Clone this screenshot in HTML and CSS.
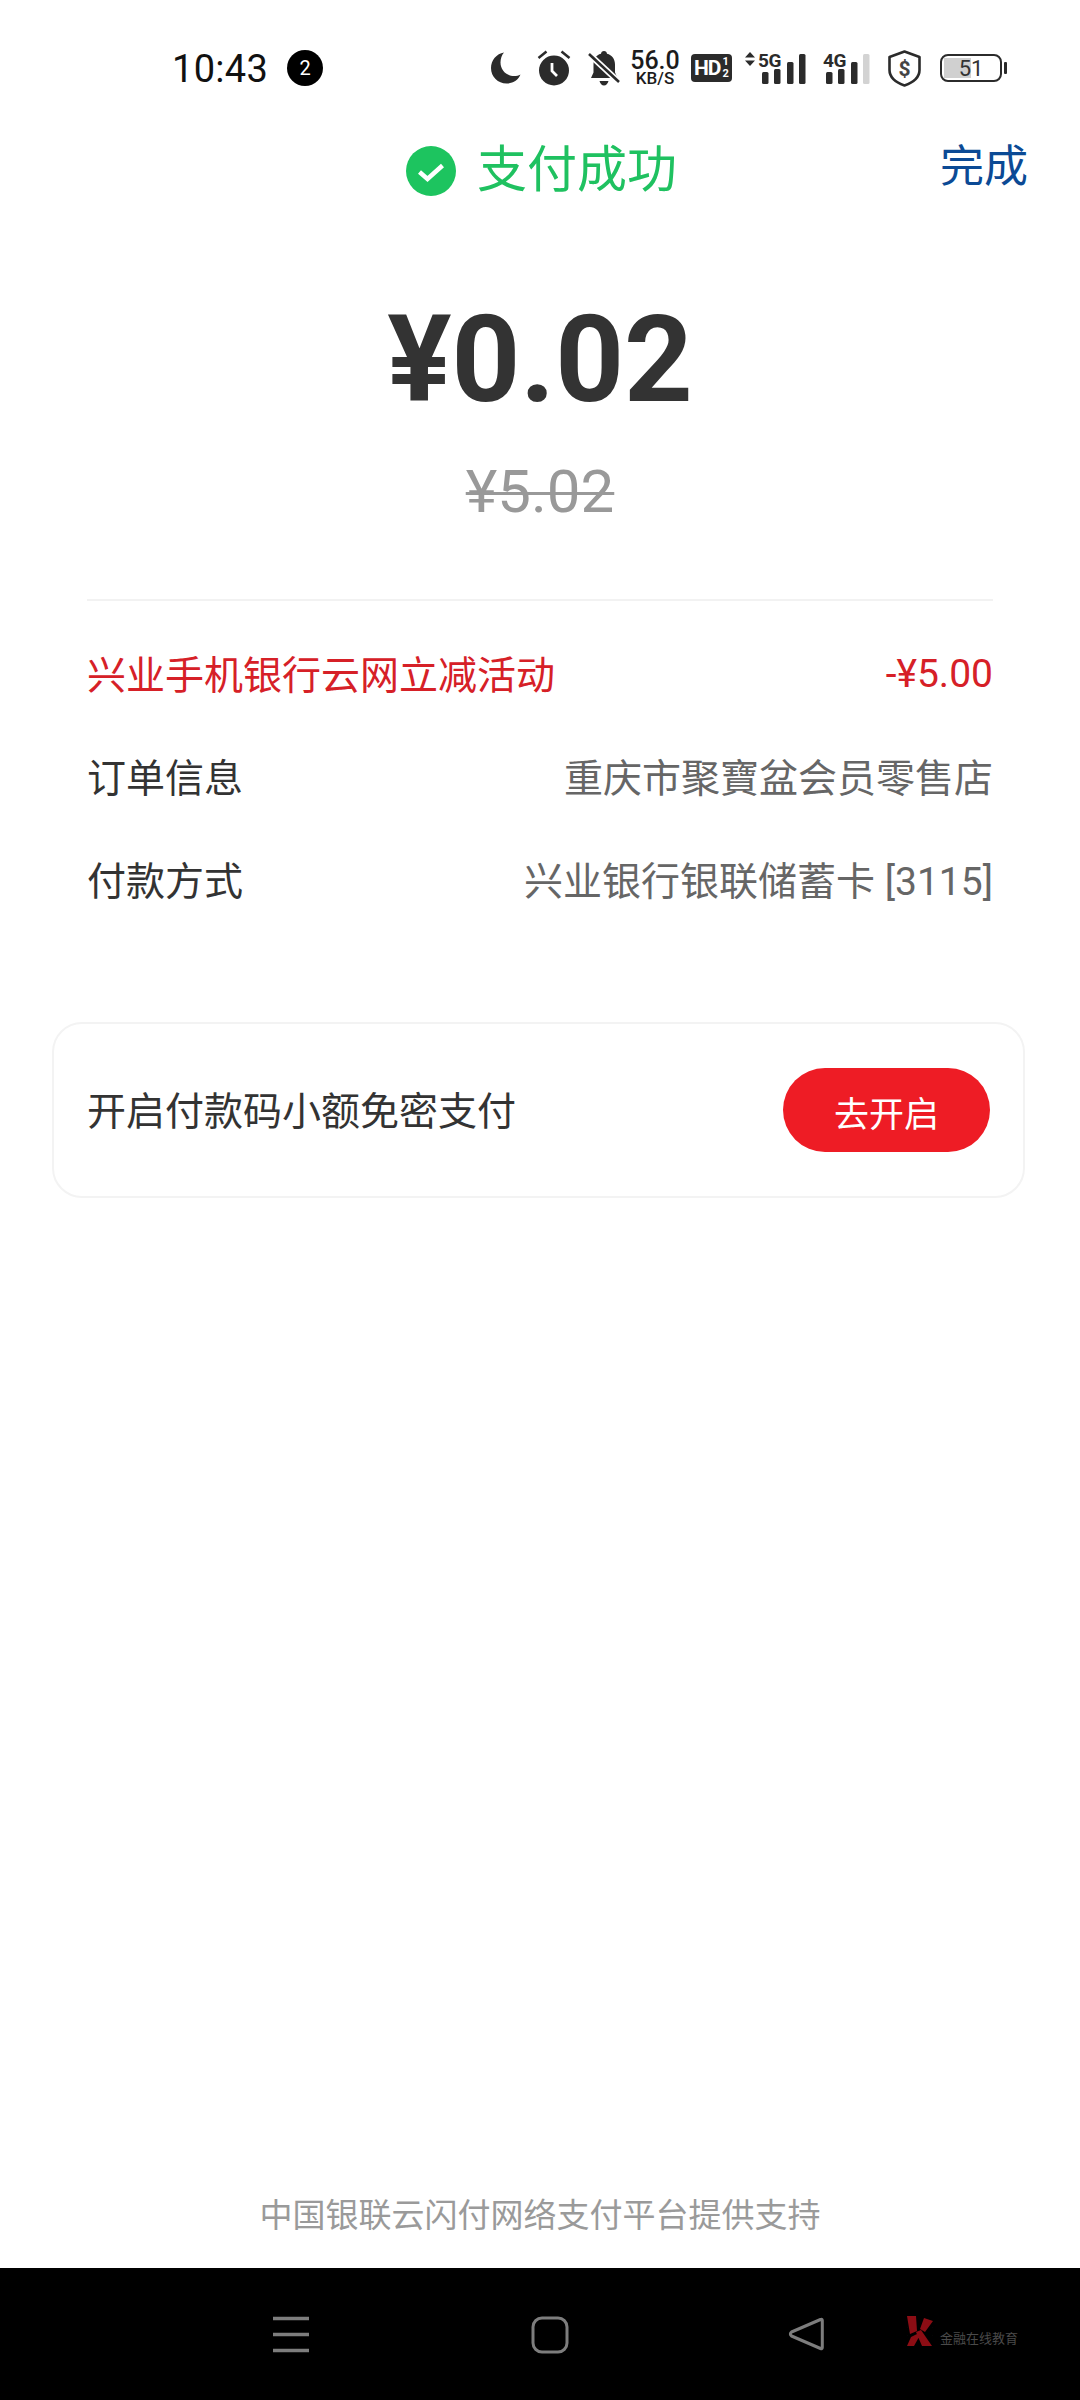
FILE: index.html
```html
<!DOCTYPE html>
<html lang="zh-CN">
<head>
<meta charset="utf-8">
<title>支付成功</title>
<link rel="stylesheet" href="styles.css">
</head>
<body>
<div class="page">
  <div class="status">
    <span class="time">10:43</span>
    <span class="badge">2</span>
    <div class="status-icons">
      <svg class="ic-moon" width="30" height="32" viewBox="0 0 30 32"><path fill="#2b2b2b" d="M13 0.5C5.5 1.8 0 8.2 0 16c0 8.8 7 15.5 15.5 15.5 6.5 0 11.8-3.6 14-9-1.9 1-4 1.5-6.3 1.5C15.2 24 9.5 18 9.5 10.5c0-3.9 1.3-7.4 3.5-10z"/></svg>
      <svg class="ic-alarm" width="34" height="36" viewBox="0 0 34 36"><circle cx="17" cy="20.500" r="15" fill="#2b2b2b"/><path d="M1.500 8 9.500 1.500M32.500 8 24.500 1.500" stroke="#2b2b2b" stroke-width="2.500" fill="none"/><path d="M15 13v8l5 5" stroke="#fff" stroke-width="2.800" fill="none"/></svg>
      <svg class="ic-bell" width="32" height="35" viewBox="0 0 32 35"><path fill="#2b2b2b" d="M16 0c1.700 0 3 1.300 3 2.800 5 1.300 8 5.300 8 10.700v8l2.500 5.500H3l2.500-5.500v-8C5.500 8 8 4.100 13 2.800 13 1.300 14.300 0 16 0zM11.500 30h9c-.6 2.600-2.400 4.500-4.500 4.500s-3.900-1.900-4.500-4.500z"/><path d="M1 3 31 31" stroke="#fff" stroke-width="6"/><path d="M1 3 31 31" stroke="#2b2b2b" stroke-width="2.600"/></svg>
      <div class="speed"><span class="speed-num">56.0</span><span class="speed-unit">KB/S</span></div>
      <div class="hd"><span class="hd-main">HD</span><span class="hd-sub"><span>1</span><span>2</span></span></div>
      <svg class="ic-sig1" width="62" height="38" viewBox="0 -4 62 38"><path fill="#2b2b2b" d="M5 0l5 5.500H0zM5 14 0 8.500h10z"/><text x="13" y="14.500" class="sig-text">5G</text><rect x="17" y="20" width="6.500" height="12" rx="1.500" fill="#2b2b2b"/><rect x="29" y="17" width="6.500" height="15" rx="1.500" fill="#2b2b2b"/><rect x="42" y="10" width="6.500" height="22" rx="1.500" fill="#2b2b2b"/><rect x="54" y="2" width="6.500" height="30" rx="1.500" fill="#2b2b2b"/></svg>
      <svg class="ic-sig2" width="47" height="38" viewBox="0 -4 47 38"><text x="0" y="14.500" class="sig-text">4G</text><rect x="3" y="20" width="6.500" height="12" rx="1.500" fill="#2b2b2b"/><rect x="15" y="17" width="6.500" height="15" rx="1.500" fill="#2b2b2b"/><rect x="28" y="10" width="6.500" height="22" rx="1.500" fill="#2b2b2b"/><rect x="40" y="2" width="6.500" height="30" rx="1.500" fill="#d3d3d3"/></svg>
      <svg class="ic-shield" width="33" height="37" viewBox="0 0 33 37"><path d="M16.500 1.500 31.500 7v13c0 7.500-6.500 12.500-15 15.500C8 32.500 1.500 27.500 1.500 20V7z" fill="none" stroke="#2b2b2b" stroke-width="2.600" stroke-linejoin="round"/><text x="16.500" y="26" class="shield-text">$</text></svg>
      <div class="battery"><div class="battery-fill"></div><span class="battery-num">51</span></div>
      <div class="battery-nub"></div>
    </div>
  </div>

  <header class="title-bar">
    <div class="title">
      <svg class="check" width="50" height="50" viewBox="0 0 50 50"><circle cx="25" cy="25" r="25" fill="#1dc45f"/><path d="M13.500 26 21.500 33 36.500 19.500" fill="none" stroke="#fff" stroke-width="4.500"/></svg>
      <span class="title-text">支付成功</span>
    </div>
    <a class="done">完成</a>
  </header>

  <section class="amounts">
    <div class="amount">¥0.02</div>
    <div class="old-amount">¥5.02</div>
  </section>

  <section class="details">
    <div class="row row-red"><span>兴业手机银行云网立减活动</span><span class="num">-¥5.00</span></div>
    <div class="row"><span>订单信息</span><span class="val">重庆市聚寶盆会员零售店</span></div>
    <div class="row"><span>付款方式</span><span class="val">兴业银行银联储蓄卡 [3115]</span></div>
  </section>

  <section class="card">
    <span class="card-text">开启付款码小额免密支付</span>
    <button class="open-btn">去开启</button>
  </section>

  <footer class="support">中国银联云闪付网络支付平台提供支持</footer>

  <nav class="navbar">
    <svg class="nav-menu" width="38" height="37" viewBox="0 0 38 37"><path d="M1 2.500H37M1 18.500H37M1 34.500H37" stroke="#7d7d7d" stroke-width="3.500"/></svg>
    <svg class="nav-home" width="38" height="38" viewBox="0 0 38 38"><rect x="2" y="2" width="34" height="34" rx="9" fill="none" stroke="#7d7d7d" stroke-width="3"/></svg>
    <svg class="nav-back" width="36" height="36" viewBox="0 0 36 36"><path d="M32.500 3.500c1-.7 1.800-.3 1.800 1v27c0 1.300-.8 1.700-1.800 1L3.500 20c-1.500-1-1.500-3 0-4z" fill="none" stroke="#7d7d7d" stroke-width="3" stroke-linejoin="round"/></svg>
    <div class="watermark">
      <svg width="26" height="31" viewBox="0 0 26 31"><path fill="#8c0d14" d="M0 0h9l1 15-7 3zM17 2l9 3-8 11-5-3zM9 16l5-2 11 16H15zM4 21l6-3 2 3-5 9H0z"/><path d="M0 11a6 6 0 0 0 0 9M26 11a6 6 0 0 1 0 9" stroke="#2a2a2a" fill="none"/></svg>
      <span class="watermark-text">金融在线教育</span>
    </div>
  </nav>
</div>
</body>
</html>
```

FILE: styles.css
```css
* { box-sizing: border-box; }
html, body { margin: 0; padding: 0; background: #fff; }
body { font-family: Roboto, "Noto Sans CJK SC", sans-serif; }

.page {
  width: 1080px;
  height: 2400px;
  display: flex;
  flex-direction: column;
  overflow: hidden;
}

/* status bar */
.status {
  height: 136px;
  flex: none;
  display: flex;
  align-items: center;
  padding-left: 172px;
}
.time { font-size: 38px; color: #111; width: 115px; letter-spacing: 0.300px; margin-top: 2px; }
.badge {
  width: 36px;
  height: 36px;
  border-radius: 50%;
  background: #000;
  color: #fff;
  font-size: 20px;
  display: flex;
  align-items: center;
  justify-content: center;
}
.status-icons {
  margin-left: 168px;
  display: flex;
  align-items: center;
  color: #2b2b2b;
}
.ic-alarm { margin-left: 16px; }
.ic-bell { margin-left: 17px; }
.speed {
  margin-left: 10px;
  width: 50px;
  display: flex;
  flex-direction: column;
  align-items: center;
  line-height: 1;
  color: #1c1c1c;
}
.speed-num { font-size: 25px; font-weight: 500; height: 21px; line-height: 21px; }
.speed-unit { font-size: 17px; height: 15px; line-height: 15px; font-weight: 500; }
.hd {
  margin-left: 11px;
  width: 41px;
  height: 28px;
  border-radius: 4px;
  background: #2b2b2b;
  color: #fff;
  display: flex;
  align-items: center;
  padding-left: 3px;
  font-weight: 700;
}
.hd-main { font-size: 21px; letter-spacing: -1px; }
.hd-sub { display: flex; flex-direction: column; font-size: 11px; line-height: 12px; margin-left: 2px; }
.ic-sig1 { margin-left: 13px; margin-bottom: 2px; }
.ic-sig2 { margin-left: 16px; margin-bottom: 2px; }
.sig-text { font-family: Roboto, sans-serif; font-size: 19px; font-weight: 700; fill: #2b2b2b; letter-spacing: -0.500px; }
.ic-shield { margin-left: 18px; }
.shield-text { font-family: Roboto, sans-serif; font-size: 21px; font-weight: 700; fill: #444; text-anchor: middle; }
.battery {
  margin-left: 19px;
  width: 62px;
  height: 28px;
  border: 2.500px solid #2b2b2b;
  border-radius: 8px;
  position: relative;
  display: flex;
  align-items: center;
  justify-content: center;
  overflow: hidden;
}
.battery-fill {
  position: absolute;
  left: 2px;
  top: 2px;
  bottom: 2px;
  width: 27px;
  background: #d0d0d0;
}
.battery-num { position: relative; font-size: 22px; color: #333; }
.battery-nub { width: 3px; height: 12px; margin-left: 2px; background: #2b2b2b; border-radius: 1px; }

/* title */
.title-bar {
  height: 66px;
  flex: none;
  display: grid;
  grid-template-columns: 1fr auto 1fr;
  align-items: center;
  line-height: 50px;
}
.title {
  grid-column: 2;
  display: flex;
  align-items: center;
  gap: 21px;
  margin-left: 3px;
  margin-top: 3px;
  font-size: 50px;
  color: #1fc160;
}
.title-text { margin-bottom: 1px; }
.done {
  grid-column: 3;
  justify-self: end;
  margin-right: 52px;
  margin-top: -5px;
  font-size: 44px;
  color: #0b4a95;
}

/* amounts */
.amounts {
  flex: none;
  margin: 0 87px;
  height: 399px;
  border-bottom: 2px solid #f2f2f2;
  display: flex;
  flex-direction: column;
  align-items: center;
}
.amount {
  margin-top: 88px;
  font-size: 120px;
  line-height: 140px;
  font-weight: 700;
  color: #333;
}
.old-amount {
  margin-top: 27px;
  font-size: 60px;
  line-height: 70px;
  color: #999;
  text-decoration: line-through;
  text-decoration-thickness: 3px;
}

/* rows */
.details {
  flex: none;
  margin: 19px 87px 0;
  display: flex;
  flex-direction: column;
}
.row {
  height: 103px;
  display: flex;
  align-items: center;
  justify-content: space-between;
  font-size: 39px;
  color: #333;
}
.row-red { color: #d62027; }
.val { color: #666; }
.num { font-size: 39px; margin-top: 4px; }

/* card */
.card {
  flex: none;
  margin: 93px 55px 0 52px;
  height: 176px;
  border: 2px solid #f3f3f3;
  border-radius: 30px;
  display: flex;
  align-items: center;
  justify-content: space-between;
  padding: 0 33px;
  font-size: 39px;
  color: #333;
}
.card-text { margin-bottom: 5px; }
.open-btn {
  width: 207px;
  height: 84px;
  border: 0;
  border-radius: 42px;
  background: #ee1c25;
  color: #fff;
  font-family: inherit;
  font-size: 35px;
  padding: 3px 0 0;
}

/* footer */
.support {
  flex: none;
  margin-top: auto;
  height: 70px;
  text-align: center;
  font-size: 33px;
  line-height: 36px;
  color: #9a9a9a;
}

/* navigation */
.navbar {
  flex: none;
  height: 132px;
  background: #000;
  display: flex;
  align-items: flex-start;
  padding: 48px 0 0 272px;
}
.nav-home { margin-left: 221px; }
.nav-back { margin-left: 219px; }
.watermark {
  display: flex;
  align-items: flex-end;
  margin-left: 83px;
  gap: 7px;
}
.watermark-text { font-size: 13px; line-height: 16px; color: #4a4a4a; }
```
